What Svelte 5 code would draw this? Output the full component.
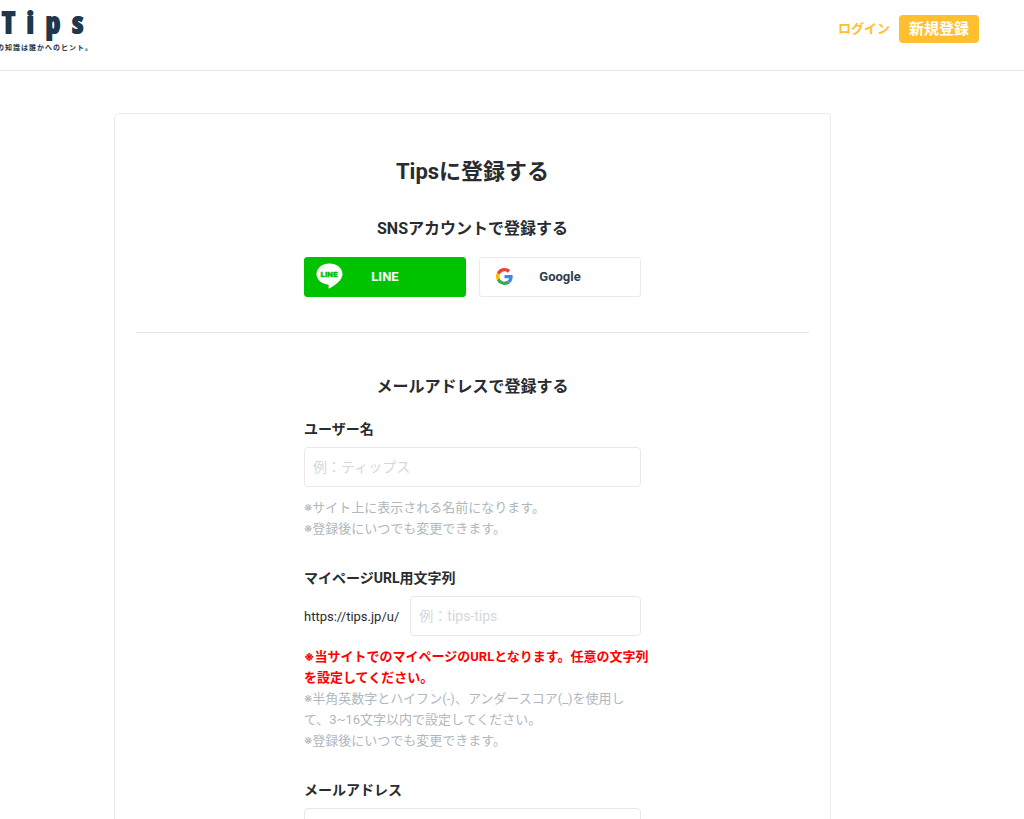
<script>
    let username = '';
    let slug = '';
    let email = '';
</script>

<style>
    :global(body) {
        margin: 0;
        background: #fff;
        color: #292b2f;
        font-family: Roboto, Inter, 'Noto Sans CJK JP', sans-serif;
    }

    .header {
        display: flex;
        justify-content: space-between;
        align-items: flex-start;
        height: 71px;
        padding-right: 45px;
        border-bottom: 1px solid #e6e6e6;
        box-sizing: border-box;
    }

    .logo {
        display: flex;
        flex-direction: column;
        align-items: flex-end;
        width: 95px;
        padding-top: 5px;
        overflow: hidden;
        color: #20364a;
        text-decoration: none;
        white-space: nowrap;
    }

    .logo-name {
        font-family: 'Open Sans Condensed', 'Roboto Condensed', Roboto, sans-serif;
        font-size: 29px;
        font-weight: 900;
        line-height: 34px;
        letter-spacing: 12px;
        -webkit-text-stroke: 2px #20364a;
    }

    .logo-copy {
        padding-right: 2px;
        font-size: 7px;
        font-weight: 700;
        line-height: 18px;
        letter-spacing: 1px;
    }

    .nav {
        display: flex;
        align-items: flex-start;
        gap: 9px;
        padding-top: 15px;
        font-weight: 700;
        line-height: 28px;
    }

    .login {
        color: #ffbf2e;
        font-size: 13px;
        text-decoration: none;
    }

    .signup {
        padding: 0 10px;
        border-radius: 4px;
        background: #ffbf2e;
        color: #fff;
        font-size: 15px;
        text-decoration: none;
    }

    .main {
        padding: 42px 193px 0 114px;
    }

    .card {
        padding: 41px 21px;
        border: 1px solid #ebebeb;
        border-radius: 5px;
    }

    h1,
    h2 {
        margin: 0;
        font-weight: 700;
        text-align: center;
    }

    h1 {
        font-size: 22px;
        line-height: 34px;
    }

    h2 {
        font-size: 16px;
        line-height: 24px;
    }

    .sns {
        padding: 28px 0 35px;
        border-bottom: 1px solid #e6e6e6;
    }

    .column {
        max-width: 337px;
        margin: 0 auto;
    }

    .sns-buttons {
        display: grid;
        grid-template-columns: 1fr 1fr;
        gap: 13px;
        margin-top: 16px;
    }

    .sns-button {
        display: grid;
        grid-template-columns: 28px 1fr 28px;
        align-items: center;
        height: 40px;
        padding: 0 10px 2px;
        border: 1px solid #ebebeb;
        border-radius: 3px;
        background: #fff;
        color: #2c3e50;
        font-family: inherit;
        font-size: 13px;
        font-weight: 700;
        cursor: pointer;
    }

    .sns-button.line {
        border-color: #00c300;
        background: #00c300;
        color: #fff;
    }

    .sns-button svg {
        display: block;
        justify-self: center;
    }

    .icon-text {
        font-family: Roboto, sans-serif;
        font-size: 8px;
        font-weight: 900;
    }

    .mail {
        padding-top: 42px;
    }

    .field {
        margin-bottom: 28px;
    }

    h2 + .field {
        margin-top: 19px;
    }

    label {
        display: block;
        margin-bottom: 7px;
        font-size: 14px;
        font-weight: 700;
        line-height: 22px;
    }

    input {
        display: block;
        flex: 1;
        width: 100%;
        min-width: 0;
        height: 40px;
        padding: 0 8px;
        border: 1px solid #e9e9e9;
        border-radius: 4px;
        box-sizing: border-box;
        background: #fff;
        color: inherit;
        font-family: inherit;
        font-size: 14px;
    }

    input::placeholder {
        color: #d3d8dd;
        opacity: 1;
    }

    .url {
        display: flex;
        align-items: center;
        gap: 11px;
        font-size: 13px;
    }

    .note {
        margin: 0;
        color: #b0b7bd;
        font-size: 13px;
        line-height: 21px;
    }

    .notes {
        margin-top: 10px;
    }

    .note.alert {
        margin-right: -12px;
        color: #f00;
        font-weight: 700;
    }
</style>

<div lang="ja">
    <header class="header">
        <a class="logo" href="/">
            <span class="logo-name">Tips</span>
            <span class="logo-copy">あなたの知識は誰かへのヒント。</span>
        </a>
        <nav class="nav">
            <a class="login" href="/login">ログイン</a>
            <a class="signup" href="/register">新規登録</a>
        </nav>
    </header>

    <main class="main">
        <div class="card">
            <h1>Tipsに登録する</h1>

            <section class="sns">
                <div class="column">
                    <h2>SNSアカウントで登録する</h2>
                    <div class="sns-buttons">
                        <button type="button" class="sns-button line">
                            <svg width="28" height="28" viewBox="0 0 28 28" aria-hidden="true">
                                <path fill="#fff" d="M14.500 1.500C7.300 1.500 1.500 6.200 1.500 12.100c0 5.300 4.700 9.600 11 10.500 1.400.3 1.300.9 1.100 2.300-.2 1.500.2 1.900 1.500 1.200C20 23.500 27.500 18.200 27.500 12.100 27.500 6.200 21.700 1.500 14.500 1.500z" />
                                <text class="icon-text" x="14" y="15" text-anchor="middle" fill="#00c300" stroke="#00c300" stroke-width=".4">LINE</text>
                            </svg>
                            <span>LINE</span>
                        </button>
                        <button type="button" class="sns-button">
                            <svg width="17" height="17" viewBox="0 0 48 48" aria-hidden="true">
                                <path fill="#ea4335" d="M24 9.500c3.500 0 6.700 1.200 9.200 3.600l6.900-6.900C35.900 2.400 30.500 0 24 0 14.600 0 6.500 5.400 2.600 13.200l8 6.200C12.400 13.700 17.700 9.500 24 9.500z" />
                                <path fill="#4285f4" d="M47 24.600c0-1.600-.2-3.100-.4-4.600H24v9h12.900c-.6 3-2.300 5.500-4.800 7.200l7.700 6C44.400 38 47 32 47 24.600z" />
                                <path fill="#fbbc05" d="M10.500 28.600a14.500 14.500 0 0 1 0-9.200l-8-6.200a24 24 0 0 0 0 21.600z" />
                                <path fill="#34a853" d="M24 48c6.500 0 11.900-2.100 15.900-5.800l-7.700-6c-2.200 1.500-4.900 2.300-8.200 2.300-6.300 0-11.600-4.200-13.500-9.900l-8 6.200C6.500 42.600 14.600 48 24 48z" />
                            </svg>
                            <span>Google</span>
                        </button>
                    </div>
                </div>
            </section>

            <form class="mail column">
                <h2>メールアドレスで登録する</h2>

                <div class="field">
                    <label for="username">ユーザー名</label>
                    <input id="username" type="text" placeholder="例：ティップス" bind:value={username} />
                    <div class="notes">
                        <p class="note">※サイト上に表示される名前になります。</p>
                        <p class="note">※登録後にいつでも変更できます。</p>
                    </div>
                </div>

                <div class="field">
                    <label for="slug">マイページURL用文字列</label>
                    <div class="url">
                        <span>https://tips.jp/u/</span>
                        <input id="slug" type="text" placeholder="例：tips-tips" bind:value={slug} />
                    </div>
                    <div class="notes">
                        <p class="note alert">※当サイトでのマイページのURLとなります。任意の文字列を設定してください。</p>
                        <p class="note">※半角英数字とハイフン(-)、アンダースコア(_)を使用して、3~16文字以内で設定してください。</p>
                        <p class="note">※登録後にいつでも変更できます。</p>
                    </div>
                </div>

                <div class="field">
                    <label for="email">メールアドレス</label>
                    <input id="email" type="email" bind:value={email} />
                </div>
            </form>
        </div>
    </main>
</div>
